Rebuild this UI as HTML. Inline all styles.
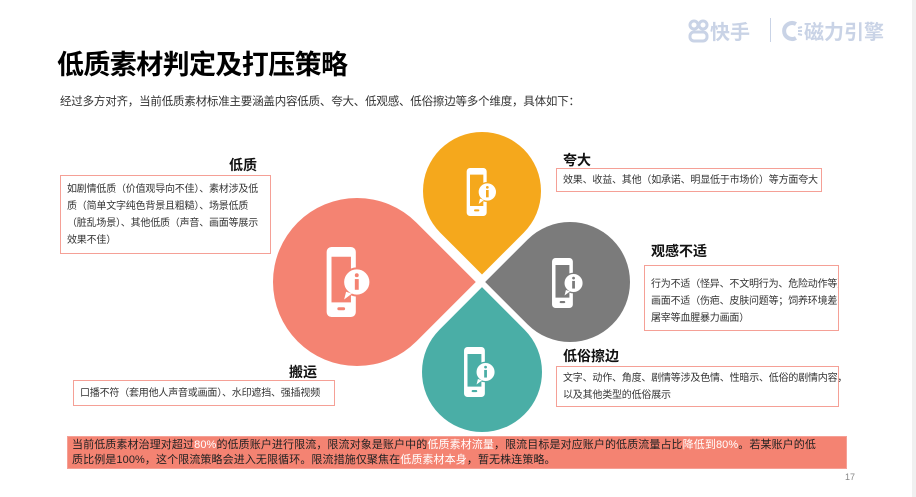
<!DOCTYPE html>
<html><head><meta charset="utf-8"><style>
*{margin:0;padding:0;box-sizing:border-box}
body{width:916px;height:497px;background:#fff;position:relative;overflow:hidden;font-family:"Liberation Sans","Noto Sans CJK SC",sans-serif;color:#333}
.strip{position:absolute;right:0;top:0;width:4px;height:497px;background:#f0f0f0}
.t{position:absolute;white-space:nowrap}
.h{font-size:14px;font-weight:bold;color:#111}
.box{position:absolute;border:1.5px solid #f5a096;font-size:10px;line-height:17px;color:#333;padding:0 6px;white-space:nowrap;letter-spacing:-0.2px}
.petal{position:absolute;border-radius:50%}
.icon{position:absolute}
</style></head><body>
<div class="strip"></div>
<div class="t" style="left:57px;top:43px;font-size:27px;font-weight:bold;color:#000;letter-spacing:-0.6px">低质素材判定及打压策略</div>
<div class="t" style="left:60px;top:93px;font-size:11.5px;color:#333;letter-spacing:-0.2px">经过多方对齐，当前低质素材标准主要涵盖内容低质、夸大、低观感、低俗擦边等多个维度，具体如下：</div>

<!-- logo -->
<div class="t" style="left:688px;top:16px;font-size:20px;color:#c9d3e6;font-weight:bold">
<svg width="22" height="24" viewBox="0 0 22 24" style="vertical-align:-4px"><g fill="none" stroke="#c9d3e6" stroke-width="3"><circle cx="6" cy="6" r="4"/><circle cx="15" cy="6" r="4"/><rect x="2" y="13" width="17" height="9" rx="4"/></g></svg>快手</div>
<div style="position:absolute;left:770px;top:18px;width:1px;height:24px;background:#c9d3e6"></div>
<div class="t" style="left:782px;top:16px;font-size:20px;color:#c9d3e6;font-weight:bold">
<svg width="22" height="24" viewBox="0 0 22 24" style="vertical-align:-4px"><path d="M14 5 A8 8 0 1 0 14 19" fill="none" stroke="#c9d3e6" stroke-width="4"/><g stroke="#c9d3e6" stroke-width="2"><line x1="16" y1="9" x2="20" y2="8"/><line x1="16" y1="12" x2="20" y2="12"/><line x1="16" y1="15" x2="20" y2="16"/></g></svg>磁力引擎</div>

<!-- petals -->
<div class="petal" style="left:273px;top:198px;width:168px;height:168px;background:#f48372;border-bottom-right-radius:0;transform:rotate(-45deg)"></div>
<div class="petal" style="left:423px;top:132px;width:118px;height:118px;background:#f5a81c;border-bottom-right-radius:0;transform:rotate(45deg)"></div>
<div class="petal" style="left:510px;top:222px;width:120px;height:120px;background:#7b7b7b;border-top-left-radius:0;transform:rotate(-45deg)"></div>
<div class="petal" style="left:422px;top:312px;width:120px;height:120px;background:#4aaea6;border-top-left-radius:0;transform:rotate(45deg)"></div>

<svg width="0" height="0" style="position:absolute"><defs>
<g id="ph"><path fill="#fff" fill-rule="evenodd" d="M5 0H25A5 5 0 0 1 30 5V67A5 5 0 0 1 25 72H5A5 5 0 0 1 0 67V5A5 5 0 0 1 5 0ZM5 10V57H25V10Z"/></g>
</defs></svg>

<svg class="icon" style="left:325px;top:247px" width="48" height="70" viewBox="0 0 46 72"><use href="#ph"/><rect x="11" y="62" width="8" height="3" rx="1.5" fill="#f48372"/><circle cx="31" cy="36" r="14" fill="#fff" stroke="#f48372" stroke-width="2"/><path d="M20 46 L18 54 L26 48Z" fill="#fff"/><circle cx="31" cy="29" r="2" fill="#f48372"/><rect x="29" y="33" width="4" height="11" fill="#f48372"/></svg>
<svg class="icon" style="left:465px;top:168px" width="34" height="48" viewBox="0 0 46 72"><use href="#ph"/><rect x="11" y="62" width="8" height="3" rx="1.5" fill="#f5a81c"/><circle cx="31" cy="36" r="14" fill="#fff" stroke="#f5a81c" stroke-width="2"/><path d="M20 46 L18 54 L26 48Z" fill="#fff"/><circle cx="31" cy="29" r="2" fill="#f5a81c"/><rect x="29" y="33" width="4" height="11" fill="#f5a81c"/></svg>
<svg class="icon" style="left:550px;top:258px" width="36" height="50" viewBox="0 0 46 72"><use href="#ph"/><rect x="11" y="62" width="8" height="3" rx="1.5" fill="#7b7b7b"/><circle cx="31" cy="36" r="14" fill="#fff" stroke="#7b7b7b" stroke-width="2"/><path d="M20 46 L18 54 L26 48Z" fill="#fff"/><circle cx="31" cy="29" r="2" fill="#7b7b7b"/><rect x="29" y="33" width="4" height="11" fill="#7b7b7b"/></svg>
<svg class="icon" style="left:462px;top:347px" width="36" height="50" viewBox="0 0 46 72"><use href="#ph"/><rect x="11" y="62" width="8" height="3" rx="1.5" fill="#4aaea6"/><circle cx="31" cy="36" r="14" fill="#fff" stroke="#4aaea6" stroke-width="2"/><path d="M20 46 L18 54 L26 48Z" fill="#fff"/><circle cx="31" cy="29" r="2" fill="#4aaea6"/><rect x="29" y="33" width="4" height="11" fill="#4aaea6"/></svg>

<!-- labels -->
<div class="t h" style="left:229px;top:155px">低质</div>
<div class="box" style="left:60px;top:175px;width:211px;height:79px;padding-top:5px">如剧情低质（价值观导向不佳）、素材涉及低<br>质（简单文字纯色背景且粗糙）、场景低质<br>（脏乱场景）、其他低质（声音、画面等展示<br>效果不佳）</div>

<div class="t h" style="left:289px;top:362px">搬运</div>
<div class="box" style="left:73px;top:380px;width:262px;height:26px;padding-top:4px">口播不符（套用他人声音或画面）、水印遮挡、强插视频</div>

<div class="t h" style="left:563px;top:150px">夸大</div>
<div class="box" style="left:556px;top:168px;width:266px;height:24px;padding-top:3px">效果、收益、其他（如承诺、明显低于市场价）等方面夸大</div>

<div class="t h" style="left:651px;top:241px">观感不适</div>
<div class="box" style="left:644px;top:265px;width:195px;height:66px;padding-top:10px;overflow:hidden">行为不适（怪异、不文明行为、危险动作等）<br>画面不适（伤疤、皮肤问题等；饲养环境差、<br>屠宰等血腥暴力画面）</div>

<div class="t h" style="left:563px;top:346px">低俗擦边</div>
<div class="box" style="left:556px;top:366px;width:283px;height:41px;padding-top:3px">文字、动作、角度、剧情等涉及色情、性暗示、低俗的剧情内容，<br>以及其他类型的低俗展示</div>

<div style="position:absolute;left:67px;top:436px;width:780px;height:33px;background:#f48372;border:1px solid #f5a096;font-size:11px;line-height:15px;color:#222;padding:1px 4px;white-space:nowrap;letter-spacing:0.1px">当前低质素材治理对超过<span style="color:#fff">80%</span>的低质账户进行限流，限流对象是账户中的<span style="color:#fff">低质素材流量</span>，限流目标是对应账户的低质流量占比<span style="color:#fff">降低到80%</span>。若某账户的低<br>质比例是100%，这个限流策略会进入无限循环。限流措施仅聚焦在<span style="color:#fff">低质素材本身</span>，暂无株连策略。</div>
<div class="t" style="left:845px;top:472px;font-size:9px;color:#888">17</div>
</body></html>
